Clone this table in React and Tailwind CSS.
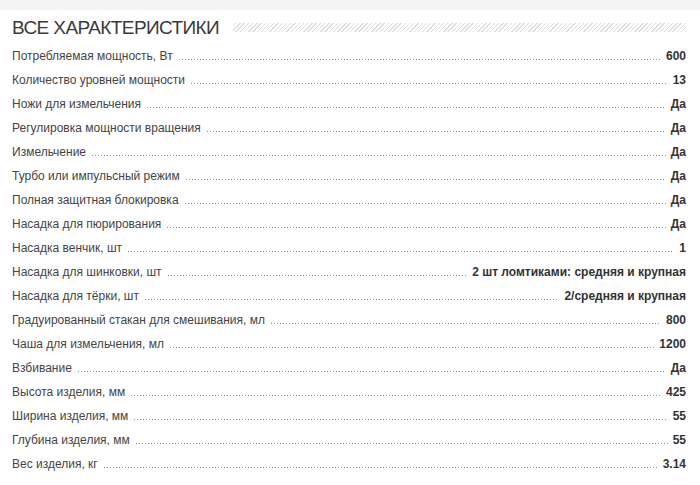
import React from "react";

const rows = [
  ["Потребляемая мощность, Вт", "600"],
  ["Количество уровней мощности", "13"],
  ["Ножи для измельчения", "Да"],
  ["Регулировка мощности вращения", "Да"],
  ["Измельчение", "Да"],
  ["Турбо или импульсный режим", "Да"],
  ["Полная защитная блокировка", "Да"],
  ["Насадка для пюрирования", "Да"],
  ["Насадка венчик, шт", "1"],
  ["Насадка для шинковки, шт", "2 шт ломтиками: средняя и крупная"],
  ["Насадка для тёрки, шт", "2/средняя и крупная"],
  ["Градуированный стакан для смешивания, мл", "800"],
  ["Чаша для измельчения, мл", "1200"],
  ["Взбивание", "Да"],
  ["Высота изделия, мм", "425"],
  ["Ширина изделия, мм", "55"],
  ["Глубина изделия, мм", "55"],
  ["Вес изделия, кг", "3.14"],
];

export default function App() {
  return (
    <div className="w-[700px] h-[485px] bg-white overflow-hidden font-['Liberation_Sans',Arial,sans-serif]">
      <div className="h-[10px] bg-[#f4f4f4]" />
      <div className="flex items-center h-[34px] pl-[12px] pr-[14px]">
        <h2 className="text-[19px] leading-none text-[#3a3a3a] tracking-[-0.6px]">ВСЕ ХАРАКТЕРИСТИКИ</h2>
        <div className="flex-1 ml-[14px] h-[9px] mt-[1px] bg-[repeating-linear-gradient(-45deg,#dcdcdc_0px,#dcdcdc_1px,transparent_1px,transparent_3px)]" />
      </div>
      <div className="flex flex-col pl-[12px] pr-[14px]">
        {rows.map(([k, v]) => (
          <div key={k} className="flex items-baseline h-[24px] pt-[5px] text-[12px] leading-[14px]">
            <span className="text-[#444]">{k}</span>
            <span className="flex-1 ml-[6px] mr-[5px] mb-[3px] h-[1px] bg-[linear-gradient(to_right,#8f8f8f_1px,transparent_1px)] bg-[length:3px_1px] bg-repeat-x" />
            <span className="font-bold text-[#333]">{v}</span>
          </div>
        ))}
      </div>
    </div>
  );
}
